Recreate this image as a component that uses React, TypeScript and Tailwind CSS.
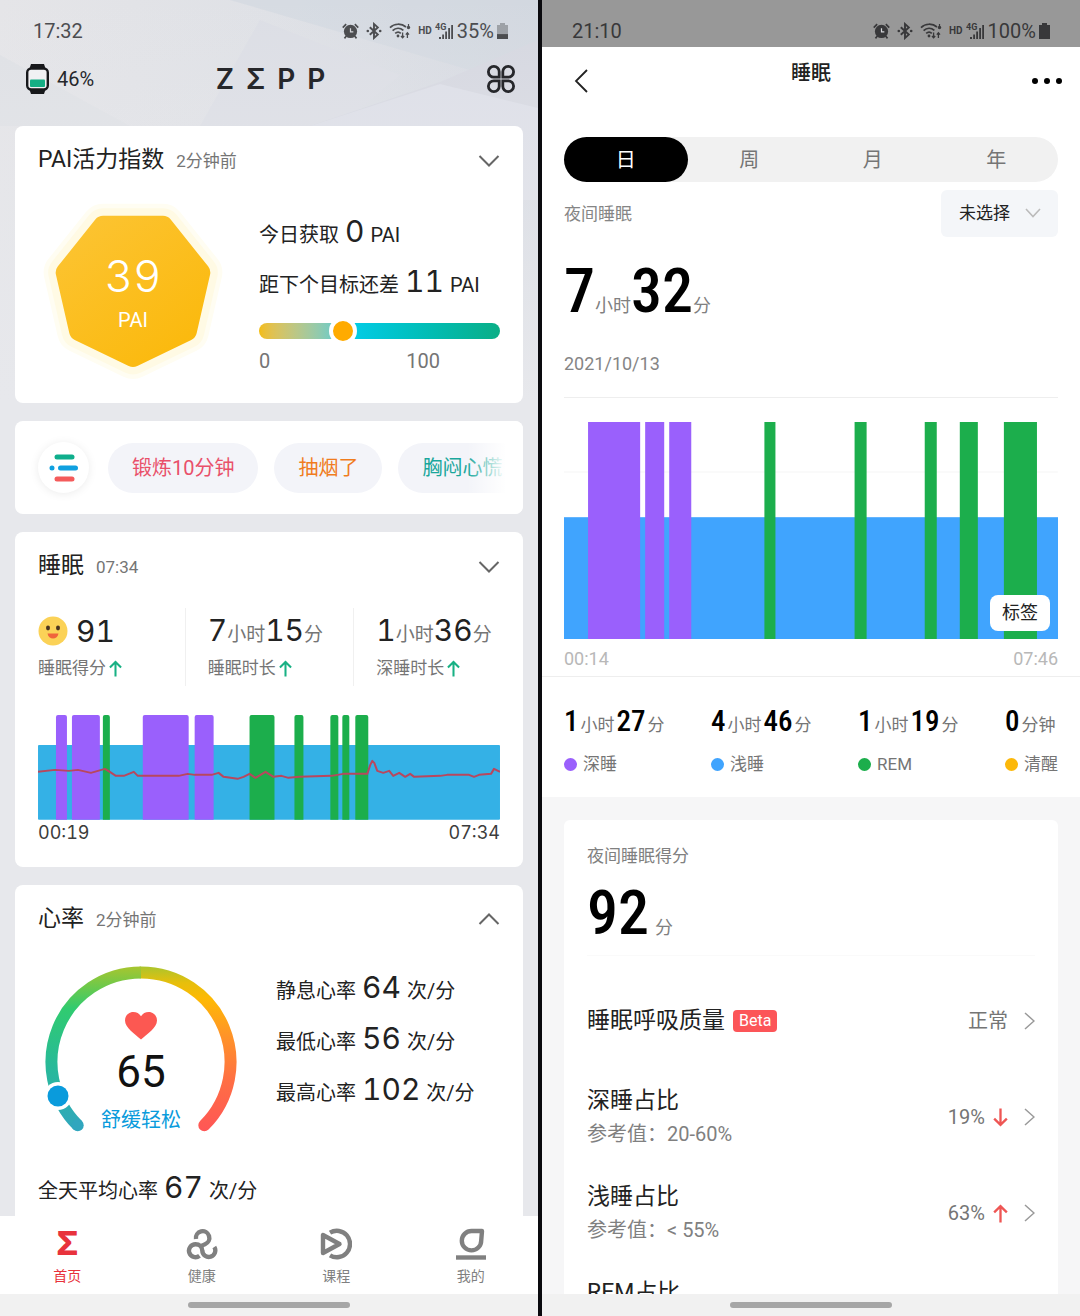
import { useState } from "react";
import type { ReactNode } from "react";

/* ---------- shared ---------- */

function AlarmIcon() {
  return (
    <svg viewBox="0 0 18 18" className="h-[18px] w-[17px]" fill="none" stroke="currentColor">
      <circle cx="9" cy="9.5" r="7" fill="currentColor" stroke="none" />
      <path d="M9 6v4h3" stroke="#d4d5d9" strokeWidth="1.3" />
      <path d="M.8 5.4 4.4 1.8M17.2 5.4 13.6 1.8M4.4 14.6l-1.8 2.2M13.6 14.6l1.8 2.2" strokeWidth="1.8" />
    </svg>
  );
}

function BluetoothIcon() {
  return (
    <svg viewBox="0 0 16 18" className="h-[18px] w-4" fill="none" stroke="currentColor" strokeWidth="1.9">
      <path d="m3.8 5.2 8 7.4L8 16V2l3.8 3.4-8 7.4" />
      <circle cx="1.8" cy="9" r="1.3" fill="currentColor" stroke="none" />
      <circle cx="14.2" cy="9" r="1.3" fill="currentColor" stroke="none" />
    </svg>
  );
}

function WifiIcon() {
  return (
    <svg viewBox="0 0 22 18" className="h-[18px] w-[22px]" fill="none" stroke="currentColor" strokeWidth="1.7">
      <path d="M1 5.6C5.4 1.2 12.6 1.2 17 5M3.6 8.6c3.2-3 7.6-3 10.8-.2M6.2 11.4c1.8-1.6 4-1.6 5.6 0" />
      <circle cx="9" cy="14" r="1.4" fill="currentColor" stroke="none" />
      <path d="M13.6 10.5v5M12 14l1.6 1.8L15.2 14M18.4 16v-5M16.8 12.6l1.6-1.8 1.6 1.8" strokeWidth="1.3" />
      <circle cx="19.5" cy="5.5" r="1.7" fill="currentColor" stroke="none" />
      <path d="M19.5 2v3" strokeWidth="1.2" />
    </svg>
  );
}

function SignalIcon() {
  return (
    <svg viewBox="0 0 18 18" className="size-[18px]" fill="currentColor">
      <text x="0" y="8" fontSize="9" fontWeight="700" fontFamily="Roboto, sans-serif">
        4G
      </text>
      <path d="M4 15h2v2H4zM7.2 12.5H9V17H7.2zM10.2 9.5H12V17h-1.8zM13.2 6H15v11h-1.8zM16.2 3H18v14h-1.8z" />
    </svg>
  );
}

function BatteryIcon({ level }: { level: number }) {
  const top = 16 - 14 * level;
  return (
    <svg viewBox="0 0 11 16" className="h-4 w-[11px]" fill="currentColor">
      <path d="M3 0h5v2h3v14H0V2h3z" opacity={level < 1 ? 0.4 : 1} />
      <rect x="0" y={top} width="11" height={16 - top} />
    </svg>
  );
}

function StatusBar({ time, battery, className }: { time: string; battery: number; className: string }) {
  return (
    <div className={"flex shrink-0 items-center justify-between pr-[30px] text-[20px] leading-6 " + className}>
      <span>{time}</span>
      <div className="flex items-center gap-[7px]">
        <AlarmIcon />
        <BluetoothIcon />
        <WifiIcon />
        <span className="text-[10px] font-bold leading-4">HD</span>
        <div className="-ml-1 flex items-center gap-1">
          <SignalIcon />
          <span>{battery}%</span>
        </div>
        <div className="-ml-1">
          <BatteryIcon level={battery / 100} />
        </div>
      </div>
    </div>
  );
}

function HomeBar() {
  return (
    <div className="flex h-[22px] shrink-0 items-center justify-center bg-[#f1f1f1]">
      <div className="h-1.5 w-[30%] rounded-full bg-[#a6a6a6]" />
    </div>
  );
}

function Num({ children }: { children: ReactNode }) {
  return <span className="font-['Inter',sans-serif] text-[30px] leading-8 tabular-nums text-[#222]">{children}</span>;
}

function Narrow({ children, className }: { children: ReactNode; className: string }) {
  return <span className={"font-['Roboto_Condensed',sans-serif] font-medium text-black " + className}>{children}</span>;
}

/* ---------- left phone ---------- */

function Card({ title, sub, open, children }: { title: string; sub: string; open?: boolean; children: ReactNode }) {
  return (
    <section className="rounded-lg bg-white px-[23px] pt-[18px]">
      <div className="flex items-center justify-between">
        <h2 className="flex items-baseline gap-3 text-[23px] leading-8 text-[#222]">
          {title}
          <span className="text-[17px] text-[#757575]">{sub}</span>
        </h2>
        <button aria-label={open ? "收起" : "展开"}>
          <svg viewBox="0 0 22 14" className={"h-3.5 w-[22px] " + (open ? "rotate-180" : "")} fill="none" stroke="#666" strokeWidth="2">
            <path d="m1.5 2 9.5 9.500L20.500 2" />
          </svg>
        </button>
      </div>
      {children}
    </section>
  );
}

function PaiBadge() {
  const points = "0,69 53.9,43 67.3,-15.4 29.9,-62.2 -29.9,-62.2 -67.3,-15.4 -53.9,43";
  return (
    <div className="relative">
      <svg viewBox="-90 -88 180 184" className="h-[184px] w-[180px]" strokeLinejoin="round">
        <defs>
          <linearGradient id="pai" gradientUnits="userSpaceOnUse" x1="-60" y1="-70" x2="50" y2="70">
            <stop offset="0" stopColor="#fcc433" />
            <stop offset="1" stopColor="#fbb90c" />
          </linearGradient>
        </defs>
        <polygon points={points} fill="#fffdf2" stroke="#fffdf2" strokeWidth="44" />
        <polygon points={points} fill="#fffae4" stroke="#fffae4" strokeWidth="35" />
        <polygon points={points} fill="url(#pai)" stroke="url(#pai)" strokeWidth="20" />
      </svg>
      <div className="absolute inset-0 flex flex-col items-center pt-[50px] text-white">
        <span className="font-['Inter',sans-serif] text-[44px] font-light leading-[52px] tabular-nums">39</span>
        <span className="pt-1 text-[20px] leading-7">PAI</span>
      </div>
    </div>
  );
}

function PaiCard() {
  return (
    <Card title="PAI活力指数" sub="2分钟前">
      <div className="flex gap-9 pb-[19px] pt-[23px]">
        <div className="ml-[5px]">
          <PaiBadge />
        </div>
        <div className="flex-1 pt-2.5 text-[20px] text-[#222]">
          <p className="flex items-baseline gap-1.5 leading-[50px]">
            今日获取 <Num>0</Num> PAI
          </p>
          <p className="flex items-baseline gap-1.5 leading-[50px]">
            距下个目标还差 <Num>11</Num> PAI
          </p>
          <div className="relative mt-[13px] h-4 rounded-full bg-linear-to-r from-[#f3bd0c] via-[#04cbe4] via-40% to-[#0aae86]">
            <span className="absolute -top-1.5 left-[29%] size-7 rounded-full border-4 border-white bg-[#ffab00]" />
          </div>
          <div className="flex justify-between pr-[60px] pt-2.5 leading-6 text-[#757575]">
            <span>0</span>
            <span>100</span>
          </div>
        </div>
      </div>
    </Card>
  );
}

function TagsCard() {
  const chips = [
    { label: "锻炼10分钟", color: "text-[#e9506a]" },
    { label: "抽烟了", color: "text-[#f07c1e]" },
    { label: "胸闷心慌", color: "text-[#1aa79c]" },
  ];
  return (
    <section className="relative flex items-center overflow-hidden rounded-lg bg-white px-[23px] py-[21px]">
      <button aria-label="标签" className="flex size-[51px] shrink-0 items-center justify-center rounded-full bg-white shadow-[0_1px_10px_rgba(0,0,0,0.08)]">
        <svg viewBox="0 0 30 28" className="h-7 w-[30px]" strokeWidth="5" strokeLinecap="round">
          <path d="M8 3h15" stroke="#0fae8c" />
          <path d="M11.500 14h15M3 14h.010" stroke="#0fa0e0" />
          <path d="M8 25h15" stroke="#f45b5b" />
        </svg>
      </button>
      <div className="ml-[19px] flex gap-4">
        {chips.map((c) => (
          <button key={c.label} className={"h-[50px] shrink-0 whitespace-nowrap rounded-full bg-[#f3f4f9] px-6 text-[20px] leading-7 " + c.color}>
            {c.label}
          </button>
        ))}
      </div>
      <div className="absolute inset-y-0 right-0 w-14 bg-linear-to-r from-transparent via-white via-70% to-white" />
    </section>
  );
}

function UpArrow({ className }: { className: string }) {
  return (
    <svg viewBox="0 0 14 18" className={"inline-block shrink-0 " + className} fill="none" stroke="currentColor" strokeWidth="2.2">
      <path d="M7 17.500V2M1 8l6-6 6 6" />
    </svg>
  );
}

function Trend({ children }: { children: ReactNode }) {
  return (
    <p className="flex items-center gap-[3px] text-[17px] leading-7">
      {children}
      <UpArrow className="h-[17px] w-[13px] text-[#18b184]" />
    </p>
  );
}

const sleepBars = [
  { x: 18, w: 11, c: "#9a60fc" },
  { x: 34, w: 28, c: "#9a60fc" },
  { x: 65, w: 7, c: "#1cae4c" },
  { x: 105, w: 46, c: "#9a60fc" },
  { x: 157, w: 19, c: "#9a60fc" },
  { x: 212, w: 25, c: "#1cae4c" },
  { x: 257, w: 9, c: "#1cae4c" },
  { x: 293, w: 8, c: "#1cae4c" },
  { x: 305, w: 7, c: "#1cae4c" },
  { x: 318, w: 13, c: "#1cae4c" },
];

const heartLine =
  "0,57 17,55 31,56 40,55 53,58 60,56 67,54 72,57 78,61 86,61 96,57 100,61 141,61 150,59 157,60 174,60 181,58 186,62 200,64 206,62 212,59 218,63 228,57 236,62 244,61 251,63 262,62 294,61 306,59 330,59 333,50 335,46 337,48 340,56 346,58 352,56 356,61 362,58 368,62 373,59 377,62 403,61 410,60 432,60 437,62 442,60 454,59 457,54 463,57";

function SleepCard() {
  return (
    <Card title="睡眠" sub="07:34">
      <div className="grid grid-cols-[147fr_169fr_147fr] whitespace-nowrap pt-[25px] text-[19px] text-[#757575]">
        <div>
          <div className="flex h-[46px] items-center gap-2">
            <svg viewBox="0 0 30 30" className="size-[30px]">
              <circle cx="15" cy="15" r="14.500" fill="#fbd257" />
              <ellipse cx="10" cy="12" rx="2" ry="2.400" fill="#4a3420" />
              <ellipse cx="20" cy="12" rx="2" ry="2.400" fill="#4a3420" />
              <path d="M9.500 17.500h11c-.6 3.200-2.800 5-5.500 5s-4.900-1.800-5.500-5z" fill="#f0643c" />
            </svg>
            <Num>91</Num>
          </div>
          <Trend>睡眠得分</Trend>
        </div>
        <div className="border-l border-[#f0f0f0] pb-1 pl-[22px]">
          <p className="h-[46px] leading-[54px]">
            <Num>7</Num>小时<Num>15</Num>分
          </p>
          <Trend>睡眠时长</Trend>
        </div>
        <div className="border-l border-[#f0f0f0] pl-[22px]">
          <p className="h-[46px] leading-[54px]">
            <Num>1</Num>小时<Num>36</Num>分
          </p>
          <Trend>深睡时长</Trend>
        </div>
      </div>
      <svg viewBox="0 0 463 105" className="mt-[29px] w-full">
        <rect x="0" y="30" width="463" height="75" rx="1" fill="#34b1e6" />
        {sleepBars.map((b) => (
          <path key={b.x} d={`M${b.x} 105V2q0-2 2-2h${b.w - 4}q2 0 2 2v103z`} fill={b.c} />
        ))}
        <polyline points={heartLine} fill="none" stroke="#b8475e" strokeWidth="2" strokeLinejoin="round" />
      </svg>
      <div className="flex justify-between pb-[21px] font-['Inter',sans-serif] text-[18px] leading-[26px] tabular-nums text-[#3c3c3c]">
        <span>00:19</span>
        <span>07:34</span>
      </div>
    </Card>
  );
}

function HeartGauge() {
  return (
    <div className="relative">
      <svg viewBox="0 0 192 172" className="h-[172px] w-48" fill="none" strokeWidth="12" strokeLinecap="round">
        <defs>
          <linearGradient id="cool" gradientUnits="userSpaceOnUse" x1="0" y1="0" x2="0" y2="165">
            <stop offset="0" stopColor="#a9c52e" />
            <stop offset="0.120" stopColor="#6fc94a" />
            <stop offset="0.260" stopColor="#30cb70" />
            <stop offset="0.600" stopColor="#28ba98" />
            <stop offset="1" stopColor="#30a6be" />
          </linearGradient>
          <linearGradient id="warm" gradientUnits="userSpaceOnUse" x1="0" y1="0" x2="0" y2="165">
            <stop offset="0" stopColor="#a9c52e" />
            <stop offset="0.100" stopColor="#e6bf0c" />
            <stop offset="0.200" stopColor="#feb904" />
            <stop offset="0.420" stopColor="#ff9428" />
            <stop offset="0.700" stopColor="#ff6e44" />
            <stop offset="1" stopColor="#ff5656" />
          </linearGradient>
        </defs>
        <path d="M96 6.500A89.500 89.500 0 0 1 159.300 159.300" stroke="url(#warm)" />
        <path d="M96 6.500A89.500 89.500 0 0 0 32.700 159.300" stroke="url(#cool)" strokeLinecap="butt" />
        <circle cx="32.700" cy="159.300" r="6" fill="#30a6be" />
        <circle cx="13" cy="130" r="14" fill="#fff" />
        <circle cx="13" cy="130" r="10.500" fill="#0a9bdc" />
        <path
          transform="translate(80 46)"
          d="M16 27.500C10 22 0 16 0 8.500 0 3.500 3.800 0 8.300 0c3.200 0 6.100 1.600 7.700 4.200C17.600 1.600 20.500 0 23.700 0 28.200 0 32 3.500 32 8.500 32 16 22 22 16 27.500z"
          fill="#fc5852"
        />
      </svg>
      <div className="absolute inset-x-0 bottom-0 flex flex-col items-center">
        <span className="text-[44px] leading-[56px] text-[#111]">65</span>
        <span className="pb-0.5 pt-1 text-[20px] leading-8 text-[#0a9bdc]">舒缓轻松</span>
      </div>
    </div>
  );
}

function HeartCard() {
  const rows = [
    ["静息心率", "64"],
    ["最低心率", "56"],
    ["最高心率", "102"],
  ];
  return (
    <Card title="心率" sub="2分钟前" open>
      <div className="flex gap-[39px] pl-[7px] pt-[30px] text-[20px] text-[#222]">
        <HeartGauge />
        <div>
          {rows.map(([label, value]) => (
            <p key={label} className="flex items-baseline gap-1.5 leading-[51px]">
              {label} <Num>{value}</Num> 次/分
            </p>
          ))}
        </div>
      </div>
      <p className="flex items-baseline gap-1.5 pb-5 pt-7 text-[20px] leading-[51px] text-[#222]">
        全天平均心率 <Num>67</Num> 次/分
      </p>
    </Card>
  );
}

function BottomNav() {
  const items = [
    {
      label: "首页",
      icon: <span className="font-['Inter',sans-serif] text-[32px] font-extrabold leading-8">Σ</span>,
    },
    {
      label: "健康",
      icon: (
        <svg viewBox="0 0 32 32" className="size-8" fill="none" stroke="currentColor" strokeWidth="4.4">
          <path d="M10 11A6.700 6.700 0 1 1 19 16.200q-2 .8-4 1.800" />
          <path d="M13.500 27.800A6.500 6.500 0 1 1 9.500 16.200c4 0 6.800 2.600 6.800 6.500a6.500 6.500 0 1 0 12-3.700" />
        </svg>
      ),
    },
    {
      label: "课程",
      icon: (
        <svg viewBox="0 0 32 32" className="size-8" fill="none" stroke="currentColor" strokeWidth="4.4" strokeLinejoin="round">
          <path d="M3 7v18l16.500-9z" />
          <path d="M10 4.700A13.200 13.200 0 1 1 10 27.300" />
        </svg>
      ),
    },
    {
      label: "我的",
      icon: (
        <svg viewBox="0 0 32 32" className="size-8" fill="none" stroke="currentColor" strokeWidth="4.4" strokeLinejoin="round">
          <path d="M27 3H16.500a9.700 9.700 0 1 0 9.700 9.700z" />
          <path d="M1 29.500h30" />
        </svg>
      ),
    },
  ];
  return (
    <nav className="flex h-[78px] shrink-0 bg-white">
      {items.map((item, i) => (
        <a key={item.label} href="#" className={"flex flex-1 flex-col items-center pt-3 " + (i === 0 ? "text-[#e8323c]" : "text-[#808080]")}>
          {item.icon}
          <span className="pt-1 text-[14px] leading-6">{item.label}</span>
        </a>
      ))}
    </nav>
  );
}

function HomeScreen() {
  return (
    <div className="relative flex h-screen min-w-0 flex-1 flex-col overflow-hidden bg-[#e7e8ec]">
      <svg viewBox="0 0 538 400" preserveAspectRatio="none" className="absolute inset-x-0 top-0 h-[400px] w-full">
        <defs>
          <linearGradient id="sky" x1="0" y1="0" x2="1" y2="0">
            <stop offset="0" stopColor="#e5e5e8" />
            <stop offset="0.500" stopColor="#dfe1e6" />
            <stop offset="1" stopColor="#d5d9e1" />
          </linearGradient>
          <linearGradient id="fade" x1="0" y1="0" x2="0" y2="1">
            <stop offset="0" stopColor="#e7e8ec" stopOpacity="0" />
            <stop offset="1" stopColor="#e7e8ec" />
          </linearGradient>
        </defs>
        <rect width="538" height="400" fill="url(#sky)" />
        <path d="M230 0 538 90V0z" fill="#d0d7df" opacity=".6" />
        <path d="M0 55 130 126H0z" fill="#dfe1e5" />
        <path d="M260 20 400 75 340 126H200z" fill="#dcdee5" />
        <path d="M538 40 440 82 310 126h228z" fill="#d5d7e0" />
        <path d="M440 84 538 108V200H310V126z" fill="#dddfe8" />
        <rect width="538" height="400" fill="url(#fade)" />
      </svg>
      <div className="relative flex min-h-0 flex-1 flex-col">
        <StatusBar time="17:32" battery={35} className="h-12 pl-[33px] pt-3.5 text-[#4c4d50]" />
        <header className="flex h-[62px] shrink-0 items-center justify-between pl-[26px] pr-[23px] text-[#26272b]">
          <div className="flex flex-1 items-center gap-2 text-[20px] leading-6">
            <svg viewBox="0 0 23 30" className="h-[30px] w-[23px]">
              <path d="M5 0h13l2 6H3zM5 30h13l2-6H3z" fill="#17181b" />
              <rect x="1.200" y="4.500" width="20.600" height="21" rx="4" fill="#f1f1f3" stroke="#17181b" strokeWidth="2.400" />
              <rect x="4" y="15.500" width="15" height="7.500" rx="1" fill="#14ae84" />
            </svg>
            46%
          </div>
          <h1 className="flex gap-3 font-['Inter',sans-serif] text-[28px] font-semibold leading-8">
            <span>Z</span>
            <span>Σ</span>
            <span>P</span>
            <span>P</span>
          </h1>
          <div className="flex flex-1 justify-end">
            <button aria-label="应用">
              <svg viewBox="0 0 28 28" className="size-7" fill="none" stroke="currentColor" strokeWidth="2.8">
                <path d="M12.200 12.200H7a5.400 5.400 0 1 1 5.200-5.200z" />
                <path d="M15.800 12.200H21A5.400 5.400 0 1 0 15.800 7z" />
                <path d="M12.200 15.800H7A5.400 5.400 0 1 0 12.200 21z" />
                <path d="M15.800 15.800H21a5.400 5.400 0 1 1-5.200 5.200z" />
              </svg>
            </button>
          </div>
        </header>
        <main className="flex min-h-0 flex-1 flex-col gap-[18px] overflow-hidden px-[15px] pt-4 *:shrink-0">
          <PaiCard />
          <TagsCard />
          <SleepCard />
          <HeartCard />
        </main>
        <BottomNav />
        <HomeBar />
      </div>
    </div>
  );
}

/* ---------- right phone ---------- */

const nightBars = [
  { x: 24, w: 52, c: "#9a60fc" },
  { x: 81, w: 19, c: "#9a60fc" },
  { x: 105, w: 22, c: "#9a60fc" },
  { x: 200, w: 11, c: "#1cae4c" },
  { x: 290, w: 12, c: "#1cae4c" },
  { x: 360, w: 12, c: "#1cae4c" },
  { x: 395, w: 18, c: "#1cae4c" },
  { x: 439, w: 33, c: "#1cae4c" },
];

const stages = [
  { h: "1", m: "27", unit: "分", label: "深睡", dot: "bg-[#9a60fc]" },
  { h: "4", m: "46", unit: "分", label: "浅睡", dot: "bg-[#40a4fe]" },
  { h: "1", m: "19", unit: "分", label: "REM", dot: "bg-[#1cae4c]" },
  { h: "", m: "0", unit: "分钟", label: "清醒", dot: "bg-[#fcb80a]" },
];

function Chevron() {
  return (
    <svg viewBox="0 0 11 18" className="h-[18px] w-[11px]" fill="none" stroke="#999" strokeWidth="1.5">
      <path d="m1 1 9 8-9 8" />
    </svg>
  );
}

function Ratio({ title, range, value, down }: { title: string; range?: string; value?: string; down?: boolean }) {
  return (
    <a href="#" className="flex h-24 items-center justify-between">
      <div>
        <p className="text-[23px] leading-[34px] text-[#222]">{title}</p>
        <p className="h-8 text-[20px] leading-8 text-[#808080]">{range}</p>
      </div>
      {value && (
        <div className="flex items-center gap-2 text-[20px] leading-6 text-[#757575]">
          {value}
          <UpArrow className={"h-[19px] w-[15px] text-[#ee5654] " + (down ? "rotate-180" : "")} />
          <span className="pl-2">
            <Chevron />
          </span>
        </div>
      )}
    </a>
  );
}

function SleepScreen() {
  const [tab, setTab] = useState("日");

  return (
    <div className="flex h-screen min-w-0 flex-1 flex-col overflow-hidden bg-[#f6f6f7]">
      <StatusBar time="21:10" battery={100} className="h-[47px] bg-[#989898] pl-[30px] pt-3.5 text-[#38383a]" />
      <main className="min-h-0 flex-1 overflow-hidden">
        <div className="bg-white">
          <header className="flex h-[90px] justify-between pl-8 pr-[18px]">
            <button aria-label="返回" className="mt-5 h-7 w-16">
              <svg viewBox="0 0 14 24" className="h-6 w-3.5" fill="none" stroke="#222" strokeWidth="1.8">
                <path d="M13 1 2 12l11 11" />
              </svg>
            </button>
            <h1 className="pt-2.5 text-[20px] font-medium leading-8 text-[#222]">睡眠</h1>
            <button aria-label="更多" className="mt-[26px] flex h-4 w-[78px] items-center justify-end gap-1.5">
              <i className="size-1.5 rounded-full bg-black" />
              <i className="size-1.5 rounded-full bg-black" />
              <i className="size-1.5 rounded-full bg-black" />
            </button>
          </header>

          <div className="px-[22px]">
            <div role="tablist" className="flex h-[45px] rounded-full bg-[#f1f1f1]">
              {["日", "周", "月", "年"].map((t) => (
                <button
                  key={t}
                  role="tab"
                  aria-selected={tab === t}
                  onClick={() => setTab(t)}
                  className={"flex-1 rounded-full text-[20px] leading-8 " + (tab === t ? "bg-black text-white" : "text-[#757575]")}
                >
                  {t}
                </button>
              ))}
            </div>

            <div className="flex items-center justify-between pt-2">
              <span className="text-[17px] leading-6 text-[#858585]">夜间睡眠</span>
              <div className="relative">
                <select aria-label="睡眠状态" className="h-[47px] w-[117px] appearance-none rounded-md bg-[#f4f6f9] pl-[18px] text-[17px] text-[#222]">
                  <option>未选择</option>
                </select>
                <svg viewBox="0 0 16 10" className="pointer-events-none absolute right-[17px] top-[18px] h-2.5 w-4" fill="none" stroke="#bbb" strokeWidth="1.6">
                  <path d="m1 1 7 7.500L15 1" />
                </svg>
              </div>
            </div>

            <p className="flex items-baseline pt-6 text-[18px] leading-6 text-[#808080]">
              <Narrow className="text-[62px] leading-[60px]">7</Narrow>小时<Narrow className="text-[62px] leading-[60px]">32</Narrow>分
            </p>
            <p className="pb-[21px] pt-[31px] text-[18px] leading-6 text-[#858585]">2021/10/13</p>

            <div className="relative border-t border-[#eee] pt-6">
              <svg viewBox="0 0 493 217" className="w-full">
                <path d="M0 50h493" stroke="#f6f6f6" />
                <rect y="95" width="493" height="122" fill="#40a4fe" />
                {nightBars.map((b) => (
                  <rect key={b.x} x={b.x} y="0" width={b.w} height="217" fill={b.c} />
                ))}
              </svg>
              <button className="absolute bottom-2 right-2 rounded-lg bg-white px-3 text-[18px] leading-9 text-[#222]">标签</button>
            </div>
            <div className="flex justify-between pb-[5px] pt-2 text-[18px] leading-6 text-[#b8b8b8]">
              <span>00:14</span>
              <span>07:46</span>
            </div>
          </div>

          <div className="flex justify-between border-t border-[#eee] px-[22px] pb-[19px] pt-[30px] text-[17px] text-[#757575]">
            {stages.map((s) => (
              <div key={s.label}>
                <p className="flex items-baseline gap-0.5 leading-6">
                  {s.h && (
                    <>
                      <Narrow className="text-[29px] leading-7">{s.h}</Narrow>小时
                    </>
                  )}
                  <Narrow className="text-[29px] leading-7">{s.m}</Narrow>
                  {s.unit}
                </p>
                <p className="flex items-center gap-1.5 pt-[13px] leading-7">
                  <span className={"size-[13px] rounded-full " + s.dot} />
                  {s.label}
                </p>
              </div>
            ))}
          </div>
        </div>

        <section className="mx-[22px] mt-[23px] rounded-md bg-white px-[23px] pb-8 pt-6">
          <h2 className="text-[17px] leading-6 text-[#808080]">夜间睡眠得分</h2>
          <p className="flex items-baseline gap-1.5 border-b border-[#fafafa] pb-3 pt-[15px] text-[18px] leading-6 text-[#808080]">
            <Narrow className="text-[62px] leading-[60px]">92</Narrow>分
          </p>
          <a href="#" className="mt-[29px] flex h-[72px] items-center justify-between">
            <span className="flex items-center gap-2 text-[23px] leading-8 text-[#222]">
              睡眠呼吸质量
              <span className="rounded bg-[#fc5558] px-1.5 text-[16px] leading-[22px] text-white">Beta</span>
            </span>
            <span className="flex items-center gap-4 text-[20px] leading-8 text-[#757575]">
              正常
              <Chevron />
            </span>
          </a>
          <div className="pt-3">
            <Ratio title="深睡占比" range="参考值：20-60%" value="19%" down />
            <Ratio title="浅睡占比" range="参考值：< 55%" value="63%" />
            <Ratio title="REM占比" />
          </div>
        </section>
      </main>
      <HomeBar />
    </div>
  );
}

export default function App() {
  return (
    <div className="flex bg-black font-['Roboto','Noto_Sans_CJK_SC',sans-serif]">
      <HomeScreen />
      <div className="w-1 shrink-0 bg-[#0a0a0e]" />
      <SleepScreen />
    </div>
  );
}
